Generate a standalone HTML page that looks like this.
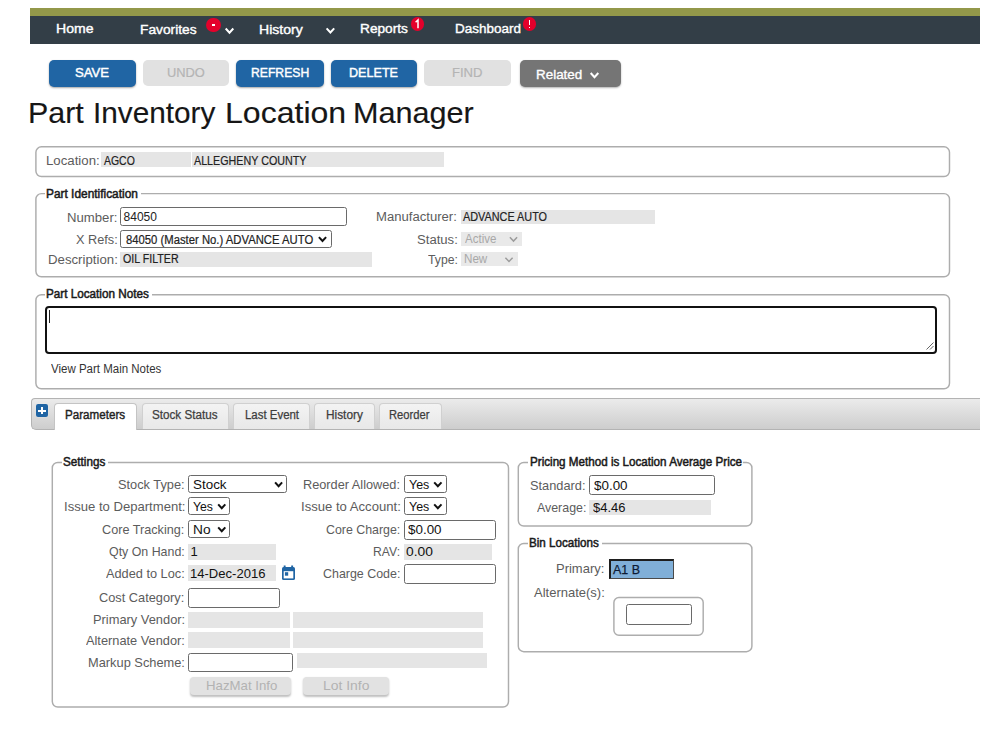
<!DOCTYPE html>
<html><head><meta charset="utf-8"><title>Part Inventory Location Manager</title>
<style>
html,body{margin:0;padding:0;background:#fff;}
body{width:1000px;height:750px;position:relative;overflow:hidden;font-family:"Liberation Sans", sans-serif;}
div,svg,span{position:absolute;}
span{white-space:nowrap;line-height:1;transform-origin:0 0;}
</style></head><body>
<svg style="left:0;top:0" width="1000" height="750">
<rect x="35.9" y="146.8" width="913.6" height="29.7" rx="5.5" fill="none" stroke="#adadad" stroke-width="1.45"/>
<rect x="35.9" y="193.6" width="913.6" height="83.2" rx="5.5" fill="none" stroke="#adadad" stroke-width="1.45"/>
<rect x="35.9" y="294.7" width="913.6" height="94.1" rx="5.5" fill="none" stroke="#adadad" stroke-width="1.45"/>
<rect x="52.3" y="462.5" width="456.2" height="244.5" rx="5.5" fill="none" stroke="#adadad" stroke-width="1.45"/>
<rect x="518.3" y="462.5" width="233.6" height="63.5" rx="5.5" fill="none" stroke="#adadad" stroke-width="1.45"/>
<rect x="518.3" y="543.5" width="233.6" height="108.2" rx="5.5" fill="none" stroke="#adadad" stroke-width="1.45"/>
<rect x="613.9" y="597.5" width="89.3" height="37.7" rx="5" fill="none" stroke="#adadad" stroke-width="1.45"/>
</svg>
<div style="left:30px;top:8px;width:950px;height:8px;background:#93984a"></div>
<div style="left:30px;top:15.5px;width:950px;height:28.5px;background:#333e47"></div>
<div style="left:206.4px;top:17.8px;width:14.4px;height:14.4px;background:#e4002b;border-radius:50%"></div>
<div style="left:410.7px;top:17.1px;width:13.8px;height:13.8px;background:#e4002b;border-radius:50%"></div>
<div style="left:522.6px;top:17.1px;width:13.8px;height:13.8px;background:#e4002b;border-radius:50%"></div>
<div style="left:49px;top:60px;width:86.7px;height:26.5px;background:#2065a4;border-radius:5px;box-shadow:0 1px 2px rgba(0,0,0,.35)"></div>
<div style="left:143px;top:60px;width:85.7px;height:26px;background:#e1e1e1;border-radius:5px"></div>
<div style="left:236.3px;top:60px;width:87.3px;height:26.5px;background:#2065a4;border-radius:5px;box-shadow:0 1px 2px rgba(0,0,0,.35)"></div>
<div style="left:331.2px;top:60px;width:85.8px;height:26.5px;background:#2065a4;border-radius:5px;box-shadow:0 1px 2px rgba(0,0,0,.35)"></div>
<div style="left:424.3px;top:60px;width:86.3px;height:26px;background:#e1e1e1;border-radius:5px"></div>
<div style="left:520px;top:60px;width:101px;height:26.6px;background:#757575;border-radius:5px;box-shadow:0 1px 2px rgba(0,0,0,.3)"></div>
<div style="left:101px;top:152.2px;width:89.7px;height:15.2px;background:#e5e5e5"></div>
<div style="left:192.3px;top:152.2px;width:252.2px;height:15.2px;background:#e5e5e5"></div>
<div style="left:45px;top:185.6px;width:95.6px;height:16px;background:#fff"></div>
<div style="left:120.4px;top:207px;width:226.3px;height:19.2px;border:1px solid #6a6a6a;border-radius:2.5px;box-sizing:border-box;background:#fff"></div>
<div style="left:120.4px;top:230px;width:211.2px;height:18px;border:1px solid #6a6a6a;border-radius:2.5px;box-sizing:border-box;background:#fff"></div>
<div style="left:120.4px;top:251.7px;width:251.2px;height:15px;background:#e5e5e5"></div>
<div style="left:461.2px;top:209.5px;width:193.8px;height:14.7px;background:#e5e5e5"></div>
<div style="left:461.2px;top:231.7px;width:61px;height:14.8px;background:#e9e9e9"></div>
<div style="left:461.2px;top:252px;width:56.4px;height:14.3px;background:#e9e9e9"></div>
<div style="left:45px;top:286px;width:107px;height:16px;background:#fff"></div>
<div style="left:45.2px;top:305.7px;width:892.1px;height:47.9px;border:2px solid #111;border-radius:4px;box-sizing:border-box;background:#fff"></div>
<div style="left:49px;top:309.8px;width:1px;height:13px;background:#222"></div>
<div style="left:30.6px;top:398px;width:949.4px;height:32px;background:linear-gradient(#ebebeb,#cdcdcd);border:1px solid #b3b3b3;border-right:none;border-radius:4px 0 0 5px;box-sizing:border-box"></div>
<div style="left:35.6px;top:404.1px;width:12.9px;height:12.7px;background:#2065a4;border-radius:2px;box-shadow:0 0 1px rgba(255,255,255,.8)"></div>
<div style="left:38.3px;top:409.5px;width:7.6px;height:2px;background:#fff"></div>
<div style="left:41.2px;top:406.7px;width:1.8px;height:7.6px;background:#fff"></div>
<div style="left:54.3px;top:402.5px;width:83.2px;height:27.5px;background:#fff;border:1px solid #c4c4c4;border-bottom:none;border-radius:4px 4px 0 0;box-sizing:border-box"></div>
<div style="left:141.8px;top:402.5px;width:87.7px;height:26.5px;background:linear-gradient(#f3f3f3,#e8e8e8);border:1px solid #d0d0d0;border-bottom:none;border-radius:4px 4px 0 0;box-sizing:border-box"></div>
<div style="left:233.3px;top:402.5px;width:77.2px;height:26.5px;background:linear-gradient(#f3f3f3,#e8e8e8);border:1px solid #d0d0d0;border-bottom:none;border-radius:4px 4px 0 0;box-sizing:border-box"></div>
<div style="left:313.8px;top:402.5px;width:61.7px;height:26.5px;background:linear-gradient(#f3f3f3,#e8e8e8);border:1px solid #d0d0d0;border-bottom:none;border-radius:4px 4px 0 0;box-sizing:border-box"></div>
<div style="left:378.8px;top:402.5px;width:63.7px;height:26.5px;background:linear-gradient(#f3f3f3,#e8e8e8);border:1px solid #d0d0d0;border-bottom:none;border-radius:4px 4px 0 0;box-sizing:border-box"></div>
<div style="left:61.6px;top:454px;width:46.5px;height:16px;background:#fff"></div>
<div style="left:188.2px;top:475.2px;width:99.2px;height:17.9px;border:1px solid #6a6a6a;border-radius:2.5px;box-sizing:border-box;background:#fff"></div>
<div style="left:188.2px;top:497.4px;width:42.3px;height:18px;border:1px solid #6a6a6a;border-radius:2.5px;box-sizing:border-box;background:#fff"></div>
<div style="left:188.2px;top:520.4px;width:42.3px;height:18px;border:1px solid #6a6a6a;border-radius:2.5px;box-sizing:border-box;background:#fff"></div>
<div style="left:188.2px;top:544.2px;width:87.8px;height:15.4px;background:#e5e5e5"></div>
<div style="left:188.2px;top:565.2px;width:87.8px;height:15.7px;background:#e5e5e5"></div>
<div style="left:188.2px;top:588.3px;width:91.8px;height:19.5px;border:1px solid #6a6a6a;border-radius:2.5px;box-sizing:border-box;background:#fff"></div>
<div style="left:188.2px;top:612.2px;width:101.8px;height:15.9px;background:#e5e5e5"></div>
<div style="left:293.4px;top:612.2px;width:189.8px;height:15.9px;background:#e5e5e5"></div>
<div style="left:188.2px;top:632.4px;width:101.8px;height:16px;background:#e5e5e5"></div>
<div style="left:293.4px;top:632.4px;width:189.8px;height:16px;background:#e5e5e5"></div>
<div style="left:188.2px;top:652.6px;width:105.3px;height:19.9px;border:1px solid #6a6a6a;border-radius:2.5px;box-sizing:border-box;background:#fff"></div>
<div style="left:296.8px;top:652.8px;width:190.3px;height:15.6px;background:#e5e5e5"></div>
<div style="left:189.6px;top:677px;width:101.6px;height:17.8px;background:#e2e2e2;border-radius:4px;box-shadow:0 1.5px 2px rgba(0,0,0,.25)"></div>
<div style="left:302.8px;top:677px;width:86.4px;height:17.8px;background:#e2e2e2;border-radius:4px;box-shadow:0 1.5px 2px rgba(0,0,0,.25)"></div>
<div style="left:404.4px;top:475.3px;width:42.4px;height:17.8px;border:1px solid #6a6a6a;border-radius:2.5px;box-sizing:border-box;background:#fff"></div>
<div style="left:404.4px;top:497.4px;width:42.4px;height:18px;border:1px solid #6a6a6a;border-radius:2.5px;box-sizing:border-box;background:#fff"></div>
<div style="left:404.4px;top:520.1px;width:91.8px;height:19.5px;border:1px solid #6a6a6a;border-radius:2.5px;box-sizing:border-box;background:#fff"></div>
<div style="left:404.4px;top:544.2px;width:87.9px;height:15.4px;background:#e5e5e5"></div>
<div style="left:404.4px;top:564.1px;width:91.8px;height:19.6px;border:1px solid #6a6a6a;border-radius:2.5px;box-sizing:border-box;background:#fff"></div>
<div style="left:527.8px;top:454px;width:215.7px;height:16px;background:#fff"></div>
<div style="left:589.4px;top:475.4px;width:126px;height:20px;border:1px solid #6a6a6a;border-radius:2.5px;box-sizing:border-box;background:#fff"></div>
<div style="left:589.4px;top:499.6px;width:122.1px;height:15.5px;background:#e5e5e5"></div>
<div style="left:527.9px;top:535.4px;width:74.1px;height:16px;background:#fff"></div>
<div style="left:608.5px;top:559.3px;width:65.5px;height:19.5px;background:#80afd8;border:2px solid #1e1e1e;border-right:1px solid #4a4a4a;border-bottom:1px solid #4a4a4a;box-sizing:border-box"></div>
<div style="left:626px;top:604.3px;width:65.6px;height:20.4px;border:1px solid #6a6a6a;border-radius:2.5px;box-sizing:border-box;background:#fff"></div>
<div style="left:212px;top:24.1px;width:3.4px;height:1.5px;background:#fff"></div>
<div style="left:528.9px;top:19.6px;width:1.5px;height:5.8px;background:#fff"></div>
<div style="left:528.9px;top:26.8px;width:1.5px;height:1.5px;background:#fff"></div>
<svg style="left:0;top:0" width="1000" height="750">
<path d="M225.70 28.50 L229.50 32.70 L233.30 28.50" fill="none" stroke="#fff" stroke-width="2"/>
<path d="M326.60 28.30 L330.40 32.50 L334.20 28.30" fill="none" stroke="#fff" stroke-width="2"/>
<path d="M590.70 73.00 L594.50 77.20 L598.30 73.00" fill="none" stroke="#fff" stroke-width="2"/>
<path d="M318.90 237.15 L322.50 241.05 L326.10 237.15" fill="none" stroke="#111" stroke-width="2"/>
<path d="M509.90 237.30 L513.50 241.10 L517.10 237.30" fill="none" stroke="#9c9c9c" stroke-width="1.5"/>
<path d="M505.40 257.70 L509.00 261.50 L512.60 257.70" fill="none" stroke="#9c9c9c" stroke-width="1.5"/>
<path d="M275.10 482.35 L278.60 486.25 L282.10 482.35" fill="none" stroke="#111" stroke-width="2"/>
<path d="M218.20 504.35 L221.75 508.25 L225.30 504.35" fill="none" stroke="#111" stroke-width="2"/>
<path d="M218.20 527.35 L221.75 531.25 L225.30 527.35" fill="none" stroke="#111" stroke-width="2"/>
<path d="M434.20 482.35 L437.85 486.25 L441.50 482.35" fill="none" stroke="#111" stroke-width="2"/>
<path d="M434.20 504.35 L437.85 508.25 L441.50 504.35" fill="none" stroke="#111" stroke-width="2"/>
<rect x="282" y="567" width="13" height="13" rx="1.6" fill="#2065a4"/><rect x="283.7" y="571.2" width="9.6" height="7.2" fill="#fff"/><rect x="283.7" y="565.5" width="1.9" height="2.5" fill="#2065a4"/><rect x="291.2" y="565.5" width="1.9" height="2.5" fill="#2065a4"/><rect x="284.9" y="572.2" width="3.3" height="3.5" fill="#2065a4"/>
<path d="M415.6 22.2 L418 20 L418 28.3" fill="none" stroke="#fff" stroke-width="1.5"/>
<path d="M926.5 349.5 L933.5 342.5 M930 349.5 L933.5 346" fill="none" stroke="#666" stroke-width="1"/>
</svg>
<span style="left:55.97px;top:22.40px;font-size:13.7px;color:#fff;-webkit-text-stroke:0.4px #fff;transform:scaleX(1.0260);">Home</span>
<span style="left:139.99px;top:23.40px;font-size:13.7px;color:#fff;-webkit-text-stroke:0.4px #fff;transform:scaleX(1.0058);">Favorites</span>
<span style="left:258.97px;top:23.40px;font-size:13.7px;color:#fff;-webkit-text-stroke:0.4px #fff;transform:scaleX(1.0264);">History</span>
<span style="left:360.00px;top:22.40px;font-size:13.7px;color:#fff;-webkit-text-stroke:0.4px #fff;">Reports</span>
<span style="left:455.02px;top:22.40px;font-size:13.7px;color:#fff;-webkit-text-stroke:0.4px #fff;transform:scaleX(0.9846);">Dashboard</span>
<span style="left:75.03px;top:66.00px;font-size:13.5px;color:#fff;-webkit-text-stroke:0.45px #fff;transform:scaleX(0.9739);">SAVE</span>
<span style="left:167.05px;top:66.00px;font-size:13.5px;color:#b4b4b4;-webkit-text-stroke:0.2px #b4b4b4;transform:scaleX(0.9528);">UNDO</span>
<span style="left:251.10px;top:66.00px;font-size:13.5px;color:#fff;-webkit-text-stroke:0.45px #fff;transform:scaleX(0.9017);">REFRESH</span>
<span style="left:349.02px;top:66.00px;font-size:13.5px;color:#fff;-webkit-text-stroke:0.45px #fff;transform:scaleX(0.9330);">DELETE</span>
<span style="left:452.00px;top:66.00px;font-size:13.5px;color:#b4b4b4;-webkit-text-stroke:0.2px #b4b4b4;transform:scaleX(0.9689);">FIND</span>
<span style="left:536.41px;top:67.60px;font-size:13.7px;color:#fff;-webkit-text-stroke:0.35px #fff;transform:scaleX(0.9806);">Related</span>
<span style="left:28.31px;top:98.50px;font-size:29px;color:#161616;-webkit-text-stroke:0.15px #161616;transform:scaleX(1.0491);">Part</span>
<span style="left:93.14px;top:98.50px;font-size:29px;color:#161616;-webkit-text-stroke:0.15px #161616;transform:scaleX(1.0250);">Inventory</span>
<span style="left:224.92px;top:98.50px;font-size:29px;color:#161616;-webkit-text-stroke:0.15px #161616;transform:scaleX(1.1048);">Location</span>
<span style="left:353.26px;top:98.50px;font-size:29px;color:#161616;-webkit-text-stroke:0.15px #161616;transform:scaleX(1.0554);">Manager</span>
<span style="left:45.90px;top:154.60px;font-size:12px;color:#5c5c5c;transform:scaleX(1.1022);">Location:</span>
<span style="left:103.67px;top:154.60px;font-size:12px;color:#222;-webkit-text-stroke:0.2px #222;transform:scaleX(0.8711);">AGCO</span>
<span style="left:194.44px;top:154.60px;font-size:12px;color:#222;-webkit-text-stroke:0.2px #222;transform:scaleX(0.8936);">ALLEGHENY COUNTY</span>
<span style="left:46.40px;top:187.60px;font-size:12px;color:#1a1a1a;-webkit-text-stroke:0.5px #1a1a1a;transform:scaleX(0.9914);">Part Identification</span>
<span style="left:66.90px;top:211.50px;font-size:12px;color:#5c5c5c;transform:scaleX(1.0956);">Number:</span>
<span style="left:123.58px;top:211.00px;font-size:12px;color:#222;">84050</span>
<span style="left:75.94px;top:233.80px;font-size:12px;color:#5c5c5c;transform:scaleX(1.0596);">X Refs:</span>
<span style="left:125.63px;top:233.50px;font-size:12px;color:#222;-webkit-text-stroke:0.2px #222;transform:scaleX(0.9409);">84050 (Master No.) ADVANCE AUTO</span>
<span style="left:47.90px;top:253.50px;font-size:12px;color:#5c5c5c;transform:scaleX(1.1017);">Description:</span>
<span style="left:122.67px;top:253.30px;font-size:12px;color:#222;-webkit-text-stroke:0.2px #222;transform:scaleX(0.8871);">OIL FILTER</span>
<span style="left:375.73px;top:211.30px;font-size:12px;color:#5c5c5c;transform:scaleX(1.0918);">Manufacturer:</span>
<span style="left:463.17px;top:211.30px;font-size:12px;color:#222;-webkit-text-stroke:0.2px #222;transform:scaleX(0.9043);">ADVANCE AUTO</span>
<span style="left:416.91px;top:233.50px;font-size:12px;color:#5c5c5c;transform:scaleX(1.0916);">Status:</span>
<span style="left:465.02px;top:232.80px;font-size:12px;color:#a8a8a8;transform:scaleX(0.9594);">Active</span>
<span style="left:427.60px;top:253.50px;font-size:12px;color:#5c5c5c;transform:scaleX(1.0182);">Type:</span>
<span style="left:464.01px;top:252.60px;font-size:12px;color:#a8a8a8;transform:scaleX(0.9696);">New</span>
<span style="left:46.41px;top:288.00px;font-size:12px;color:#1a1a1a;-webkit-text-stroke:0.5px #1a1a1a;transform:scaleX(0.9753);">Part Location Notes</span>
<span style="left:51.41px;top:363.00px;font-size:12px;color:#333;transform:scaleX(0.9580);">View Part Main Notes</span>
<span style="left:65.23px;top:409.40px;font-size:12.3px;color:#222;-webkit-text-stroke:0.4px #222;transform:scaleX(0.9461);">Parameters</span>
<span style="left:152.05px;top:409.40px;font-size:12.3px;color:#3d3d3d;-webkit-text-stroke:0.25px #3d3d3d;transform:scaleX(0.9486);">Stock Status</span>
<span style="left:245.28px;top:409.40px;font-size:12.3px;color:#3d3d3d;-webkit-text-stroke:0.25px #3d3d3d;transform:scaleX(0.9298);">Last Event</span>
<span style="left:326.25px;top:409.40px;font-size:12.3px;color:#3d3d3d;-webkit-text-stroke:0.25px #3d3d3d;transform:scaleX(0.9625);">History</span>
<span style="left:389.31px;top:409.40px;font-size:12.3px;color:#3d3d3d;-webkit-text-stroke:0.25px #3d3d3d;transform:scaleX(0.9095);">Reorder</span>
<span style="left:62.81px;top:456.00px;font-size:12px;color:#1a1a1a;-webkit-text-stroke:0.5px #1a1a1a;transform:scaleX(0.9740);">Settings</span>
<span style="left:118.21px;top:478.00px;font-size:13px;color:#5c5c5c;transform:scaleX(0.9848);">Stock Type:</span>
<span style="left:63.79px;top:500.00px;font-size:13px;color:#5c5c5c;transform:scaleX(1.0068);">Issue to Department:</span>
<span style="left:101.83px;top:523.00px;font-size:13px;color:#5c5c5c;transform:scaleX(0.9735);">Core Tracking:</span>
<span style="left:108.82px;top:545.00px;font-size:13px;color:#5c5c5c;transform:scaleX(0.9527);">Qty On Hand:</span>
<span style="left:106.19px;top:567.00px;font-size:13px;color:#5c5c5c;transform:scaleX(0.9814);">Added to Loc:</span>
<span style="left:99.40px;top:591.30px;font-size:13px;color:#5c5c5c;transform:scaleX(0.9835);">Cost Category:</span>
<span style="left:93.21px;top:613.40px;font-size:13px;color:#5c5c5c;transform:scaleX(0.9890);">Primary Vendor:</span>
<span style="left:86.00px;top:633.60px;font-size:13px;color:#5c5c5c;transform:scaleX(0.9839);">Alternate Vendor:</span>
<span style="left:87.62px;top:656.00px;font-size:13px;color:#5c5c5c;transform:scaleX(0.9865);">Markup Scheme:</span>
<span style="left:303.43px;top:477.80px;font-size:13px;color:#5c5c5c;transform:scaleX(0.9794);">Reorder Allowed:</span>
<span style="left:300.99px;top:500.00px;font-size:13px;color:#5c5c5c;transform:scaleX(1.0083);">Issue to Account:</span>
<span style="left:326.01px;top:522.80px;font-size:13px;color:#5c5c5c;transform:scaleX(0.9522);">Core Charge:</span>
<span style="left:373.08px;top:545.00px;font-size:13px;color:#5c5c5c;transform:scaleX(0.9357);">RAV:</span>
<span style="left:323.44px;top:567.00px;font-size:13px;color:#5c5c5c;transform:scaleX(0.9557);">Charge Code:</span>
<span style="left:192.56px;top:478.00px;font-size:13px;color:#111;transform:scaleX(1.0323);">Stock</span>
<span style="left:192.62px;top:500.00px;font-size:13px;color:#111;transform:scaleX(0.9408);">Yes</span>
<span style="left:192.53px;top:523.00px;font-size:13px;color:#111;transform:scaleX(1.0546);">No</span>
<span style="left:190.40px;top:545.00px;font-size:13px;color:#111;">1</span>
<span style="left:190.40px;top:567.00px;font-size:13px;color:#111;transform:scaleX(1.0041);">14-Dec-2016</span>
<span style="left:205.57px;top:679.20px;font-size:13px;color:#b2b2b2;transform:scaleX(1.0177);">HazMat Info</span>
<span style="left:322.93px;top:679.20px;font-size:13px;color:#b2b2b2;transform:scaleX(1.0692);">Lot Info</span>
<span style="left:408.65px;top:477.80px;font-size:13px;color:#111;transform:scaleX(0.9560);">Yes</span>
<span style="left:408.65px;top:500.00px;font-size:13px;color:#111;transform:scaleX(0.9560);">Yes</span>
<span style="left:408.39px;top:523.00px;font-size:13px;color:#111;transform:scaleX(1.0312);">$0.00</span>
<span style="left:405.94px;top:545.00px;font-size:13px;color:#111;transform:scaleX(1.0629);">0.00</span>
<span style="left:529.62px;top:456.00px;font-size:12px;color:#1a1a1a;-webkit-text-stroke:0.5px #1a1a1a;transform:scaleX(0.9702);">Pricing Method is Location Average Price</span>
<span style="left:530.01px;top:478.80px;font-size:13px;color:#5c5c5c;transform:scaleX(0.9838);">Standard:</span>
<span style="left:594.00px;top:478.80px;font-size:13px;color:#111;transform:scaleX(1.0312);">$0.00</span>
<span style="left:537.00px;top:500.50px;font-size:13px;color:#5c5c5c;transform:scaleX(0.9530);">Average:</span>
<span style="left:592.80px;top:500.50px;font-size:13px;color:#111;transform:scaleX(0.9972);">$4.46</span>
<span style="left:529.02px;top:537.40px;font-size:12px;color:#1a1a1a;-webkit-text-stroke:0.5px #1a1a1a;transform:scaleX(0.9676);">Bin Locations</span>
<span style="left:555.80px;top:562.40px;font-size:13px;color:#5c5c5c;transform:scaleX(0.9980);">Primary:</span>
<span style="left:612.80px;top:562.60px;font-size:13px;color:#0d1a33;-webkit-text-stroke:0.25px #0d1a33;transform:scaleX(0.9575);">A1 B</span>
<span style="left:534.00px;top:585.50px;font-size:13px;color:#5c5c5c;">Alternate(s):</span>
</body></html>
